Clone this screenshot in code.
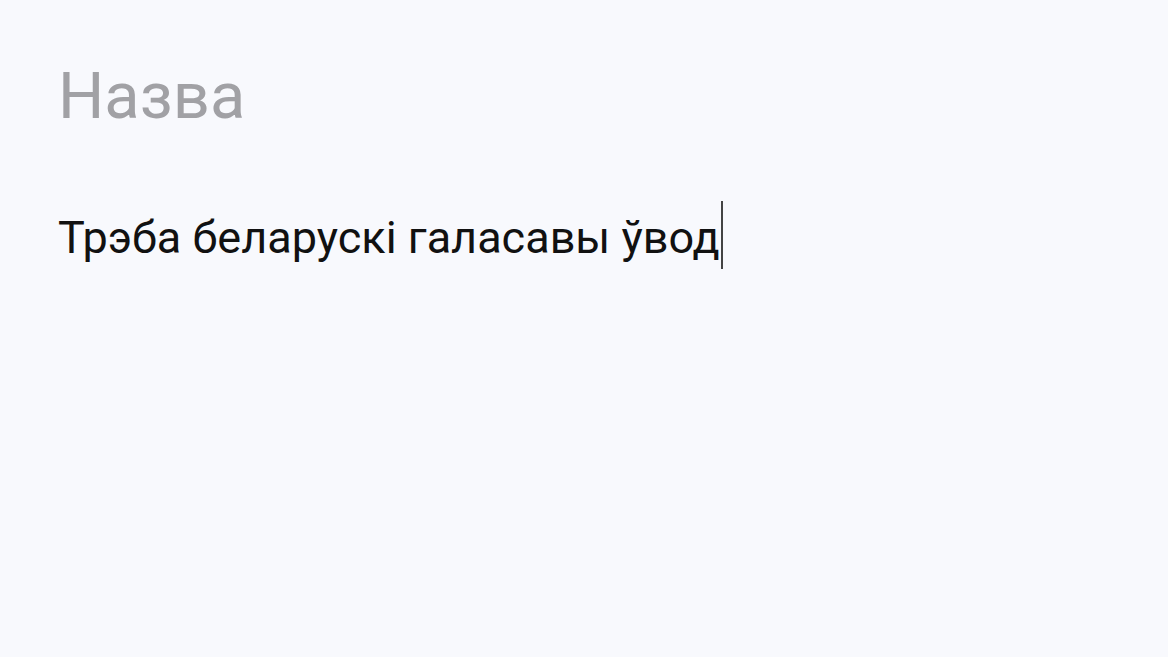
export default function App() {
  return (
    <div className="min-h-[657px] w-full bg-[#f8f9fd] px-[58px] pt-[64px]" style={{ fontFamily: 'Roboto, "Noto Sans", sans-serif' }}>
      <h1 className="text-[65px] font-normal leading-none text-[#a1a1a5]">Назва</h1>
      <div className="mt-[86px] text-[45px] leading-none text-[#111111]">
        <span className="relative inline-block">
          Трэба беларускі галасавы ўвод
          <span className="absolute -right-[3px] top-[-14px] h-[68px] w-[2px] bg-[#444444]" />
        </span>
      </div>
    </div>
  );
}
